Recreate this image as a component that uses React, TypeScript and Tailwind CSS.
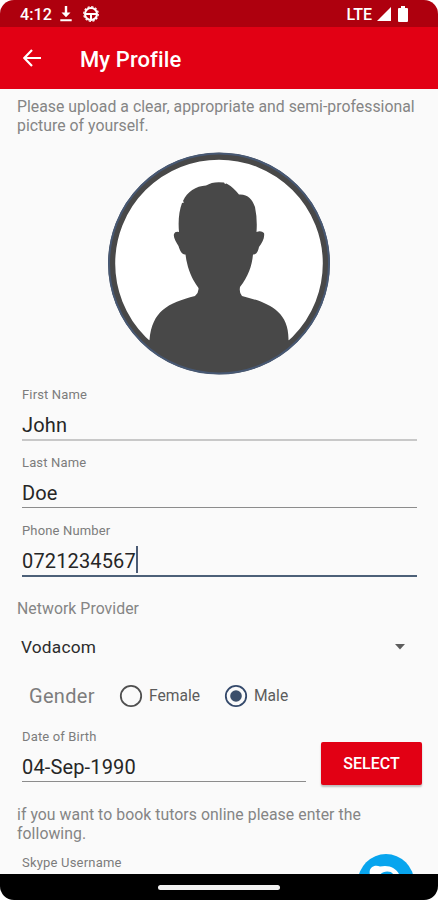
import React from "react";

// Labelled text field with a Material style underline
const Field = ({
  label,
  value,
  focused,
  line,
}: {
  label: string;
  value: string;
  focused?: boolean;
  line: string;
}) => (
  <div className="flex h-[68px] flex-col">
    <span className="h-[15px] text-[13px] leading-[15px] tracking-[0.15px] text-[#7c7c7c]">
      {label}
    </span>
    <div className="mt-[8px] flex h-[27px] items-center">
      <span className="pt-[3px] text-[20px] leading-[27px] tracking-[0.15px] text-[#262626]">
        {value}
      </span>
      {focused && <span className="h-[27px] w-[2px] bg-[#4c5c75]" />}
    </div>
    <div className={line} />
  </div>
);

const Radio = ({ label, checked }: { label: string; checked?: boolean }) => (
  <label className="flex items-center">
    <svg width="24" height="24" viewBox="0 0 24 24">
      <circle
        cx="12"
        cy="12"
        r="10.2"
        fill="none"
        stroke={checked ? "#34496b" : "#4f4f4f"}
        strokeWidth="1.8"
      />
      {checked && <circle cx="12" cy="12" r="5.8" fill="#3b4f6b" />}
    </svg>
    <span className="ml-[6px] text-[15.6px] leading-[20px] text-[#5c5c5c]">
      {label}
    </span>
  </label>
);

const StatusBar = () => (
  <div className="flex h-[27px] items-center bg-[#ae000e] pr-[30px] pl-[20px] text-white">
    <span className="pt-[2px] text-[16.2px] leading-[25px] font-medium">4:12</span>
    <svg className="ml-[8px]" width="12" height="16" viewBox="0 0 12 16">
      <path d="M4.8 0h2.4v6.5h3.3L6 11.3 1.5 6.5h3.3zM.3 13.3h11.4v1.9H.3z" fill="#fff" />
    </svg>
    <svg className="ml-[11px]" width="16" height="16" viewBox="0 0 16 16">
      <circle cx="8" cy="8" r="6" fill="none" stroke="#fff" strokeWidth="2" />
      <circle cx="8" cy="8" r="7.3" fill="none" stroke="#fff" strokeWidth="1.2" strokeDasharray="2.2 1.622" />
      <path d="M2 8h12M8 8v6" stroke="#fff" strokeWidth="2" />
    </svg>
    <span className="ml-auto pt-[2px] text-[16px] leading-[25px] font-medium">LTE</span>
    <svg className="ml-[5px]" width="14" height="14" viewBox="0 0 14 14">
      <path d="M14 0v14H0z" fill="#fff" />
    </svg>
    <svg className="ml-[7px]" width="10" height="16" viewBox="0 0 10 16">
      <path d="M3 0h4v2h2q1 0 1 1v12q0 1-1 1H1q-1 0-1-1V3q0-1 1-1h2z" fill="#fff" />
    </svg>
  </div>
);

const AppBar = () => (
  <div className="flex h-[62px] items-center bg-[#e20014] pl-[23px]">
    <svg width="18" height="18" viewBox="0 0 18 18">
      <path d="M18 9H1.5M9 1 1.3 9 9 17" fill="none" stroke="#fff" strokeWidth="2.2" />
    </svg>
    <h1 className="ml-[39px] pt-[4px] text-[22px] leading-[30px] font-medium tracking-[0.1px] text-white">
      My Profile
    </h1>
  </div>
);

const Avatar = () => (
  <svg width="224" height="224" viewBox="107 151 224 224">
    <defs>
      <clipPath id="avatar">
        <circle cx="219" cy="263.5" r="109.5" />
      </clipPath>
    </defs>
    <circle cx="219" cy="263.5" r="107.3" fill="#fff" stroke="#484848" strokeWidth="7" />
    <g clipPath="url(#avatar)">
      <path
        d="M198.5 288C195 283 191 277 188 267Q186 260 185.5 254.5C182 255 180 251 178.5 246C176 242 173 237 174 234Q175 231 179 232C178 221 179 211 182 203L184 202.5L183 201C187 192 196 186 206 185.5Q213 181 224 182.5L225 184L226.5 183.5Q233 187 239 194.5C248 194 252 199 255 207Q257.5 219 256.5 232Q261 230 264 233C265 238 262 243 259 247C258 252 256 255 253 254.5C252 266 248 277 240 287Q239 293 242 296C265 302 289 309 288.5 340L300 350V385H137V350L149.5 340C152 311 168 303 195 296Q199 292 198.5 288Z"
        fill="#484848"
      />
    </g>
    <circle cx="219" cy="263.5" r="110" fill="none" stroke="#475873" strokeWidth="2" />
  </svg>
);

const SkypeButton = () => (
  <svg width="56" height="56" viewBox="0 0 56 56">
    <circle cx="28" cy="28" r="28" fill="#08a5ee" />
    <path d="M12 21C10 14 16 10 22 12.5C31 10.5 38 14 41 20V38H12Z" fill="#fff" />
    <path d="M22 22C22 17 33 16 35 20V34H22Z" fill="#08a5ee" />
  </svg>
);

export default function App() {
  return (
    <div className="h-[900px] w-[438px] bg-white font-['Roboto',sans-serif]">
      <div className="relative flex h-full flex-col overflow-hidden rounded-[14px] bg-[#fafafa]">
        <StatusBar />
        <AppBar />

        <main className="flex h-[785px] flex-col overflow-hidden">
          <p className="mt-[9px] ml-[17px] text-[15.8px] leading-[18.5px] tracking-[0.02px] whitespace-nowrap text-[#858585]">
            Please upload a clear, appropriate and semi-professional
            <br />
            picture of yourself.
          </p>
          <div className="mt-[16px] ml-[107px] h-[224px]">
            <Avatar />
          </div>

          <div className="mt-[12px] mr-[21px] ml-[22px]">
            <Field label="First Name" value="John" line="mt-[2px] h-[2px] bg-[#c8c8c8]" />
            <Field label="Last Name" value="Doe" line="mt-[2px] h-px bg-[#8c8c8c]" />
            <Field label="Phone Number" value="0721234567" focused line="mt-[2px] h-[2px] bg-[#4c6078]" />
          </div>

          <span className="mt-[8px] ml-[17px] text-[15.8px] leading-[20px] tracking-[0.05px] text-[#858585]">
            Network Provider
          </span>
          <div className="mt-[17px] mr-[33px] ml-[21px] flex h-[22px] items-center justify-between">
            <span className="text-[17.3px] leading-[22px] tracking-[0.2px] text-[#2c2c2c]">
              Vodacom
            </span>
            <svg width="10" height="6" viewBox="0 0 10 6">
              <path d="M0 0h10L5 5.5z" fill="#5d5d5d" />
            </svg>
          </div>

          <div className="mt-[25px] ml-[29px] flex h-[26px] items-center">
            <span className="w-[90px] text-[20px] leading-[26px] tracking-[0.3px] text-[#7d7d7d]">
              Gender
            </span>
            <div className="w-[105px]">
              <Radio label="Female" />
            </div>
            <Radio label="Male" checked />
          </div>

          <div className="mt-[20px] mr-[16px] ml-[22px] flex h-[68px]">
            <div className="w-[284px]">
              <Field label="Date of Birth" value="04-Sep-1990" line="mt-[2px] h-px bg-[#8c8c8c]" />
            </div>
            <button className="mt-[13px] ml-auto h-[43px] w-[101px] rounded-[2px] bg-[#e20014] pt-px text-[16px] font-medium text-white shadow-[0_2px_2px_rgba(0,0,0,0.25)]">
              SELECT
            </button>
          </div>

          <p className="mt-[9px] ml-[17px] text-[15.8px] leading-[18.5px] tracking-[0.05px] text-[#858585]">
            if you want to book tutors online please enter the
            <br />
            following.
          </p>
          <span className="mt-[12px] ml-[22px] text-[13px] leading-[15px] tracking-[0.2px] text-[#7c7c7c]">
            Skype Username
          </span>
        </main>

        <div className="absolute top-[854px] left-[358px] h-[20px] overflow-hidden">
          <SkypeButton />
        </div>

        <div className="flex h-[26px] items-center justify-center bg-black">
          <div className="h-[5px] w-[122px] rounded-full bg-[#f2f2f2]" />
        </div>
      </div>
    </div>
  );
}
